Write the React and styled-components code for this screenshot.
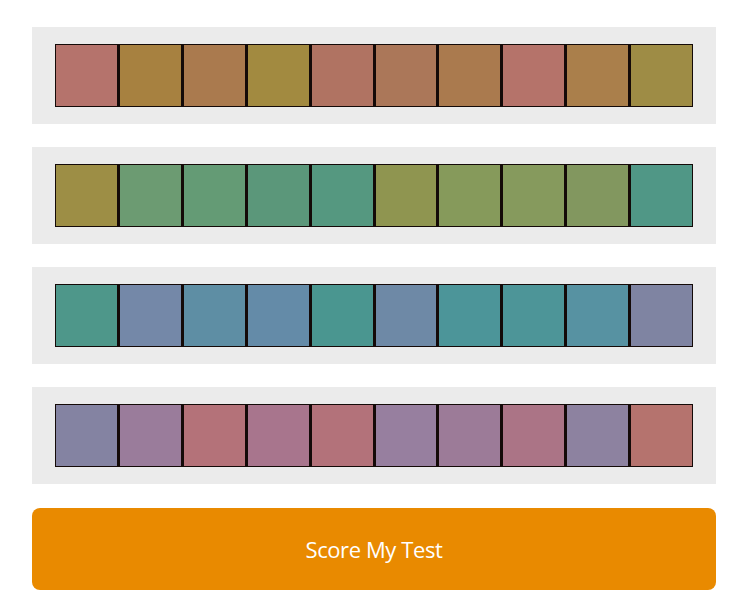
import React from "react";
import styled, { createGlobalStyle } from "styled-components";

const GlobalStyle = createGlobalStyle`
  body {
    margin: 0;
    background: #ffffff;
    font-family: "Open Sans", "Noto Sans", sans-serif;
  }
`;

const rows = [
  ["#b5736c", "#a78140", "#aa7a4e", "#a28a40", "#b07362", "#ab7759", "#aa7a4e", "#b5736a", "#aa7f4b", "#9e8c45"],
  ["#9d8e45", "#6c9b72", "#649b75", "#5b977a", "#559880", "#8f9550", "#869a5b", "#869a5d", "#82975f", "#509786"],
  ["#4e978a", "#7488a8", "#5e8ea4", "#648ba8", "#4a9690", "#6e89a6", "#4c9599", "#4d9598", "#5792a2", "#7f84a2"],
  ["#8483a2", "#9a7c9b", "#b47279", "#a8758d", "#b3727a", "#977f9f", "#9c7b98", "#ab7486", "#8d82a0", "#b5736e"],
];

export default function App() {
  return (
    <>
      <GlobalStyle />
      <Page>
        {rows.map((row, i) => (
          <Panel key={i}>
            <Strip>
              {row.map((c, j) => (
                <Cell key={j} $color={c} />
              ))}
            </Strip>
          </Panel>
        ))}
        <ScoreButton>Score My Test</ScoreButton>
      </Page>
    </>
  );
}

const Page = styled.div`
  width: 684px;
  padding: 27px 0 0 32px;
  display: flex;
  flex-direction: column;
  gap: 23px;
`;

const Panel = styled.div`
  background: #ebebeb;
  padding: 17px 23px;
`;

const Strip = styled.div`
  display: flex;
  height: 63px;
`;

const Cell = styled.div`
  flex: 1;
  background: ${({ $color }) => $color};
  border: 1px solid #140a08;
  & + & {
    border-left-width: 2px;
  }
`;

const ScoreButton = styled.button`
  margin-top: 1px;
  height: 82px;
  border: none;
  border-radius: 8px;
  background: #e98a00;
  color: #ffffff;
  font-family: "Open Sans", "Noto Sans", sans-serif;
  font-size: 22px;
  letter-spacing: -0.4px;
  cursor: pointer;
`;
